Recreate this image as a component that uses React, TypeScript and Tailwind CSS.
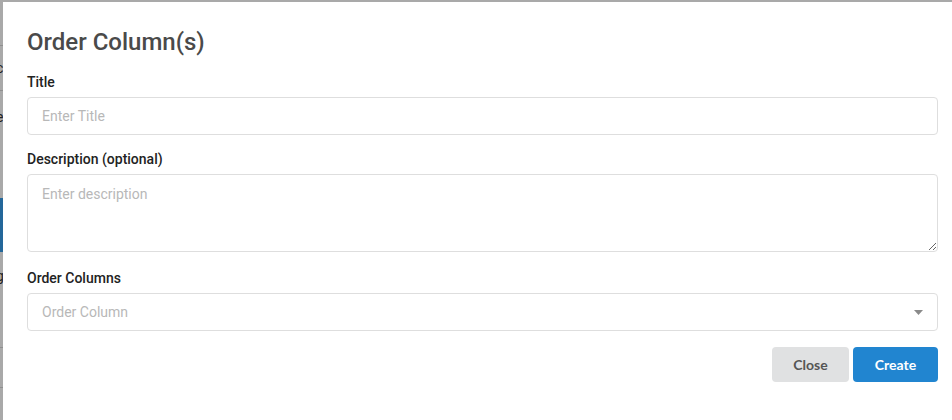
const font = { fontFamily: "Roboto, 'Liberation Sans', sans-serif" };

export default function App() {
  return (
    <div className="grid h-[420px] w-[952px] grid-cols-[3px_minmax(0,1fr)] overflow-hidden bg-[#a9a9a9]" style={font}>
      {/* dimmed page behind the modal */}
      <div className="flex flex-col overflow-hidden text-[14px] leading-[16px] text-[#222]">
        <div className="mt-[45px] h-px bg-[#8f8f8f]" />
        <span className="ml-[-4px] mt-[14px]">c</span>
        <div className="mt-[14px] h-px bg-[#8f8f8f]" />
        <span className="ml-[-4px] mt-[18px]">e</span>
        <div className="mt-[73px] h-[54px] bg-[#23679a]" />
        <span className="ml-[-4px] mt-[16px]">g</span>
        <div className="mt-[63px] h-px bg-[#8f8f8f]" />
        <div className="mt-[39px] h-px bg-[#8f8f8f]" />
      </div>

      {/* modal */}
      <div className="mt-[2px] bg-white pl-6 pr-[14px] pt-[24px]">
        <h2 className="text-[24px] font-medium leading-[32px] text-[#4a4a4a]">Order Column(s)</h2>

        <div className="mt-[16px] flex flex-col gap-[7px]">
          <label className="text-[14px] font-medium leading-[16px] text-[#222]">Title</label>
          <input
            placeholder="Enter Title"
            className="h-[38px] w-full rounded-[4px] border border-[#dedede] px-[14px] text-[14px] text-[#333] outline-none placeholder:text-[#b8b8b8]"
          />
        </div>

        <div className="mt-[16px] flex flex-col gap-[7px]">
          <label className="text-[14px] font-medium leading-[16px] text-[#222]">Description (optional)</label>
          <textarea
            placeholder="Enter description"
            className="h-[78px] w-full rounded-[4px] border border-[#dedede] px-[14px] py-[9px] text-[14px] leading-[20px] text-[#333] outline-none placeholder:text-[#b8b8b8]"
          />
        </div>

        <div className="mt-[18px] flex flex-col gap-[7px]">
          <label className="text-[14px] font-medium leading-[16px] text-[#222]">Order Columns</label>
          <div className="flex h-[38px] w-full items-center justify-between rounded-[4px] border border-[#dedede] pl-[14px] pr-[14px]">
            <span className="text-[14px] text-[#b8b8b8]">Order Column</span>
            <svg width="9" height="5" viewBox="0 0 9 5" className="text-[#8a8a8a]">
              <path d="M0 0h9L4.5 5z" fill="currentColor" />
            </svg>
          </div>
        </div>

        <div className="mt-[16px] flex justify-end gap-1" style={{ fontFamily: "Lato, 'Liberation Sans', sans-serif" }}>
          <button className="h-[35px] w-[77px] rounded-[4px] bg-[#e0e1e2] text-[14px] font-bold text-[#555]">
            Close
          </button>
          <button className="h-[35px] w-[85px] rounded-[4px] bg-[#2185d0] text-[14px] font-bold text-white">
            Create
          </button>
        </div>
      </div>
    </div>
  );
}
